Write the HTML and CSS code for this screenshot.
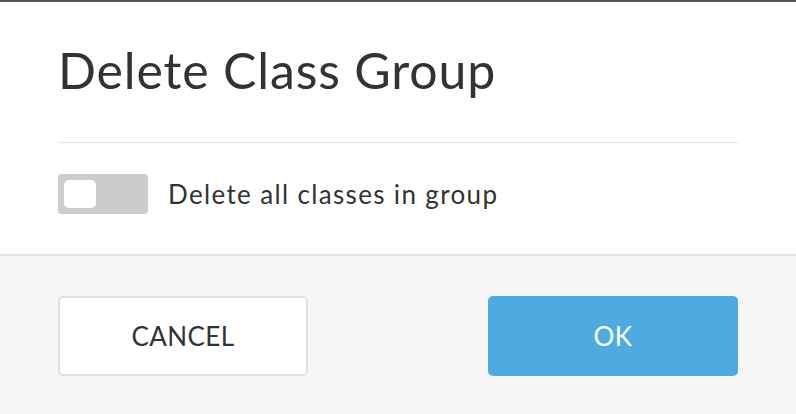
FILE: index.html
```html
<!DOCTYPE html>
<html>
<head>
<meta charset="utf-8">
<link rel="stylesheet" href="styles.css">
</head>
<body>
<div class="modal">
  <div class="content">
    <h1 class="title">Delete Class Group</h1>
    <div class="divider"></div>
    <label class="option">
      <span class="toggle"><span class="knob"></span></span>
      <span class="option-label">Delete all classes in group</span>
    </label>
  </div>
  <div class="footer">
    <button class="btn btn-cancel">CANCEL</button>
    <button class="btn btn-ok">OK</button>
  </div>
</div>
</body>
</html>
```

FILE: styles.css
```css
* { box-sizing: border-box; }
html, body { margin: 0; padding: 0; }
body {
  width: 796px;
  height: 414px;
  overflow: hidden;
  background: #ffffff;
  font-family: Lato, "Open Sans", sans-serif;
  color: #333333;
}
.modal {
  height: 414px;
  display: flex;
  flex-direction: column;
  border-top: 2px solid #555555;
}
.content {
  padding: 38px 58px 0;
  height: 252px;
}
.title {
  margin: 0;
  height: 60px;
  font-size: 50px;
  line-height: 60px;
  font-weight: 400;
  letter-spacing: 0.85px;
  color: #333333;
}
.divider {
  margin-top: 42px;
  height: 1px;
  background: #e4e4e4;
}
.option {
  margin-top: 31px;
  display: flex;
  align-items: center;
  gap: 20px;
}
.toggle {
  width: 90px;
  height: 40px;
  border-radius: 4px;
  background: #cccccc;
  padding: 6px;
  display: flex;
}
.knob {
  width: 32px;
  height: 28px;
  border-radius: 5px;
  background: #ffffff;
}
.option-label {
  font-size: 26px;
  line-height: 40px;
  letter-spacing: 1.35px;
  color: #333333;
}
.footer {
  flex: 1;
  background: #f6f6f6;
  border-top: 2px solid #e2e2e2;
  padding: 40px 58px 0;
  display: flex;
  justify-content: space-between;
  align-items: flex-start;
}
.btn {
  width: 250px;
  height: 80px;
  border-radius: 5px;
  font-family: Lato, "Open Sans", sans-serif;
  font-size: 26px;
  letter-spacing: 0.4px;
  cursor: pointer;
}
.btn-cancel {
  background: #ffffff;
  border: 2px solid #e0e0e0;
  color: #333333;
}
.btn-ok {
  background: #4eabdf;
  border: none;
  color: #ffffff;
}
```
